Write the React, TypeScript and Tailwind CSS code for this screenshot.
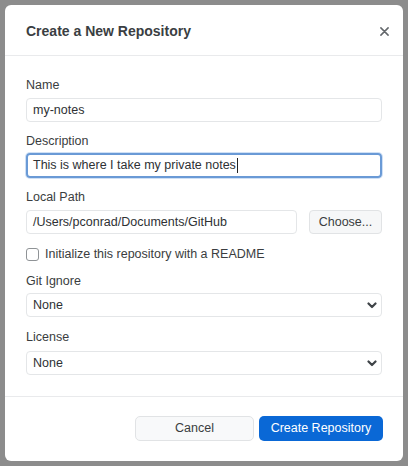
import React from 'react'

function Chevron() {
  return (
    <svg width="10" height="7" viewBox="0 0 10 7" className="shrink-0">
      <path d="M1.5 1.5 L5 5 L8.5 1.5" fill="none" stroke="#3f4448" strokeWidth="2.2" strokeLinecap="round" strokeLinejoin="round" />
    </svg>
  )
}

function Label({ children, className = '' }: { children: React.ReactNode; className?: string }) {
  return <div className={`h-4 text-[12.5px] leading-4 text-[#3a3d40] ${className}`}>{children}</div>
}

function Select({ value }: { value: string }) {
  return (
    <div className="flex h-6 items-center justify-between rounded-[4px] border border-[#e4e6e8] bg-white pl-[6px] pr-[4px] text-[12.5px] text-[#2e3134]">
      <span>{value}</span>
      <Chevron />
    </div>
  )
}

export default function App() {
  return (
    <div
      className="h-[466px] w-[408px] bg-[#8c8c8c] p-[5px]"
      style={{ fontFamily: '"Liberation Sans", Arial, sans-serif' }}
    >
      <div className="flex h-[456px] w-[398px] flex-col overflow-hidden rounded-[6px] bg-white">
        <div className="flex h-[51px] items-center justify-between border-b border-[#e9eaec] pl-[21px] pr-[14px] pt-[2px]">
          <h1 className="text-[14px] font-bold text-[#3a3e42]">Create a New Repository</h1>
          <svg width="9" height="9" viewBox="0 0 10 10">
            <path d="M1 1 L9 9 M9 1 L1 9" stroke="#63676b" strokeWidth="1.7" strokeLinecap="round" />
          </svg>
        </div>

        <div className="flex flex-col border-b border-[#e9eaec] px-[21px] pb-[21px] pt-[21px]">
          <Label className="mb-[5px]">Name</Label>
          <div className="flex h-6 items-center rounded-[4px] border border-[#e4e6e8] px-[6px] text-[12.5px] text-[#2e3134]">
            my-notes
          </div>

          <Label className="mb-[4px] mt-[11px]">Description</Label>
          <div className="flex h-[25px] items-center rounded-[4px] border-2 border-[#6a9ad6] px-[5px] text-[12.5px] text-[#2e3134] shadow-[0_0_0_1px_#cfe0f5]">
            This is where I take my private notes
            <span className="ml-px inline-block h-[15px] w-px bg-[#222]" />
          </div>

          <Label className="mb-[5px] mt-[11px]">Local Path</Label>
          <div className="flex gap-3">
            <div className="flex h-6 flex-1 items-center rounded-[4px] border border-[#e4e6e8] px-[6px] text-[12.5px] text-[#2e3134]">
              /Users/pconrad/Documents/GitHub
            </div>
            <button className="flex h-6 w-[73px] items-center justify-center rounded-[4px] border border-[#e1e3e5] bg-[#f6f7f8] text-[12.5px] text-[#3a3d40]">
              Choose...
            </button>
          </div>

          <div className="mt-[13px] flex h-[14px] items-center gap-[6px]">
            <span className="block h-[13px] w-[13px] rounded-[3px] border border-[#8f9396] bg-white" />
            <span className="text-[12.5px] text-[#3a3d40]">Initialize this repository with a README</span>
          </div>

          <Label className="mb-[4px] mt-[12px]">Git Ignore</Label>
          <Select value="None" />

          <Label className="mb-[6px] mt-[12px]">License</Label>
          <Select value="None" />
        </div>

        <div className="flex flex-1 items-start justify-end gap-[5px] pr-[20px] pt-[19px]">
          <button className="h-[25px] w-[119px] rounded-[5px] border border-[#e1e3e5] bg-[#f8f9fa] text-[12.5px] text-[#3a3d40]">
            Cancel
          </button>
          <button className="h-[25px] w-[124px] rounded-[5px] bg-[#0a68d6] text-[12.5px] text-white">
            Create Repository
          </button>
        </div>
      </div>
    </div>
  )
}
